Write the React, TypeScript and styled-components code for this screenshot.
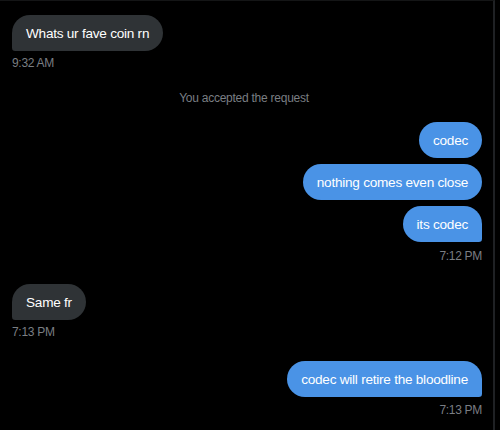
import React from "react";
import styled, { createGlobalStyle } from "styled-components";

const Global = createGlobalStyle`
  html, body { margin: 0; padding: 0; background: #000; }
  body { font-family: "Liberation Sans", Arial, sans-serif; }
`;

const Page = styled.div`
  width: 495px;
  height: 430px;
  box-sizing: border-box;
  background: #000;
  border-right: 2px solid #1f2124;
  border-top: 1px solid #141516;
  padding: 14px 11px 0 12px;
  display: flex;
  flex-direction: column;
`;

const Group = styled.div<{ $side: "left" | "right"; $top: number }>`
  display: flex;
  flex-direction: column;
  align-items: ${(p) => (p.$side === "right" ? "flex-end" : "flex-start")};
  gap: 6px;
  margin-top: ${(p) => p.$top}px;
`;

const Bubble = styled.div<{ $side: "left" | "right"; $last?: boolean }>`
  box-sizing: border-box;
  height: 36px;
  display: flex;
  align-items: center;
  padding: 0 14px;
  font-family: "Liberation Sans", Arial, sans-serif;
  font-size: 13.6px;
  letter-spacing: -0.25px;
  color: #fff;
  background: ${(p) => (p.$side === "right" ? "#4a93e6" : "#2f3336")};
  border-radius: ${(p) =>
    p.$last
      ? p.$side === "right"
        ? "22px 22px 4px 22px"
        : "22px 22px 22px 4px"
      : "22px"};
  white-space: nowrap;
`;

const Time = styled.div<{ $gap: number }>`
  font-family: "Liberation Sans", Arial, sans-serif;
  font-size: 12px;
  letter-spacing: -0.3px;
  line-height: 16px;
  color: #7a7e83;
  margin-top: ${(p) => p.$gap - 6}px;
`;

const System = styled.div`
  font-family: "Liberation Sans", Arial, sans-serif;
  font-size: 12px;
  letter-spacing: -0.25px;
  line-height: 16px;
  color: #7a7e83;
  text-align: center;
  margin-top: 19px;
  padding-right: 6px;
`;

export default function App() {
  return (
    <>
      <Global />
      <Page>
        <Group $side="left" $top={0}>
          <Bubble $side="left" $last>Whats ur fave coin rn</Bubble>
          <Time $gap={4}>9:32 AM</Time>
        </Group>
        <System>You accepted the request</System>
        <Group $side="right" $top={16}>
          <Bubble $side="right">codec</Bubble>
          <Bubble $side="right">nothing comes even close</Bubble>
          <Bubble $side="right" $last>its codec</Bubble>
          <Time $gap={6}>7:12 PM</Time>
        </Group>
        <Group $side="left" $top={20}>
          <Bubble $side="left" $last>Same fr</Bubble>
          <Time $gap={4}>7:13 PM</Time>
        </Group>
        <Group $side="right" $top={21}>
          <Bubble $side="right" $last>codec will retire the bloodline</Bubble>
          <Time $gap={5}>7:13 PM</Time>
        </Group>
      </Page>
    </>
  );
}
